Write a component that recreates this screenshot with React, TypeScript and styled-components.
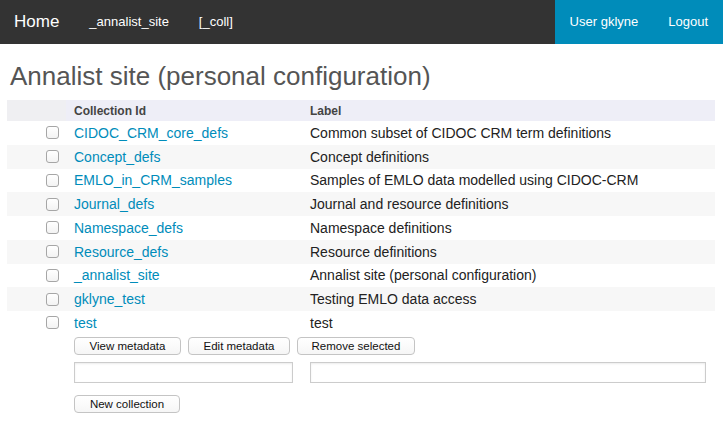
import React from "react";
import styled, { createGlobalStyle } from "styled-components";

const GlobalStyle = createGlobalStyle`
  html, body {
    margin: 0;
    padding: 0;
    background: #ffffff;
    font-family: "Liberation Sans", Arial, sans-serif;
    color: #222222;
  }
`;

interface Collection {
  id: string;
  label: string;
}

const collections: Collection[] = [
  { id: "CIDOC_CRM_core_defs", label: "Common subset of CIDOC CRM term definitions" },
  { id: "Concept_defs", label: "Concept definitions" },
  { id: "EMLO_in_CRM_samples", label: "Samples of EMLO data modelled using CIDOC-CRM" },
  { id: "Journal_defs", label: "Journal and resource definitions" },
  { id: "Namespace_defs", label: "Namespace definitions" },
  { id: "Resource_defs", label: "Resource definitions" },
  { id: "_annalist_site", label: "Annalist site (personal configuration)" },
  { id: "gklyne_test", label: "Testing EMLO data access" },
  { id: "test", label: "test" },
];

const TopBar = styled.nav`
  display: flex;
  justify-content: space-between;
  align-items: stretch;
  height: 44px;
  background-color: #333333;
`;

const NavGroup = styled.div<{ $accent?: boolean }>`
  display: flex;
  align-items: center;
  padding: ${(p) => (p.$accent ? "0" : "0 0 0 14px")};
  background-color: ${(p) => (p.$accent ? "#008cba" : "transparent")};
`;

const NavLink = styled.a<{ $big?: boolean; $first?: boolean }>`
  color: #ffffff;
  text-decoration: none;
  font-size: ${(p) => (p.$big ? "17px" : "13px")};
  padding: ${(p) => (p.$first ? "0 30px 0 0" : "0 15px")};
  line-height: 44px;
  margin-right: ${(p) => (p.$first ? "-15px" : "0")};
`;

const Page = styled.main`
  padding: 0 8px 0 7px;
`;

const Title = styled.h1`
  margin: 0;
  padding: 16px 0 0 3px;
  height: 56px;
  box-sizing: border-box;
  font-size: 26px;
  font-weight: normal;
  line-height: 32px;
  color: #555555;
`;

const Grid = styled.div`
  display: grid;
  grid-template-columns: 59px 236px 1fr;
`;

const HeadCell = styled.div<{ $lead?: boolean }>`
  height: 21px;
  display: flex;
  align-items: center;
  padding-left: 8px;
  background-color: ${(p) => (p.$lead ? "#efeff2" : "#eeeef7")};
  font-size: 12px;
  font-weight: bold;
  color: #444444;
`;

const Row = styled.div<{ $striped: boolean }>`
  display: contents;

  & > div {
    background-color: ${(p) => (p.$striped ? "#f7f7f7" : "#ffffff")};
  }
`;

const Cell = styled.div`
  height: 23.75px;
  display: flex;
  align-items: center;
  padding-left: 8px;
  font-size: 14px;
  color: #222222;
`;

const CheckCell = styled.div`
  height: 23.75px;
  display: flex;
  align-items: center;
  padding-left: 39px;
`;

const Check = styled.span`
  display: inline-block;
  width: 11px;
  height: 11px;
  border: 1px solid #a6a6a6;
  border-radius: 3px;
  background: linear-gradient(#ffffff, #f3f3f3);
`;

const Link = styled.a`
  color: #008cba;
  text-decoration: none;
`;

const Actions = styled.div`
  display: grid;
  grid-template-columns: 59px 236px 1fr;
  row-gap: 7px;
  padding-top: 2px;
`;

const ButtonRow = styled.div`
  grid-column: 2 / 4;
  display: flex;
  gap: 7px;
  padding-left: 8px;
`;

const Button = styled.button<{ $w: number }>`
  width: ${(p) => p.$w}px;
  height: 18px;
  padding: 0;
  border: 1px solid #c4c4c4;
  border-radius: 4px;
  background: linear-gradient(#ffffff, #f6f6f6);
  font-family: "Liberation Sans", Arial, sans-serif;
  font-size: 11.5px;
  color: #111111;
`;

const InputCell = styled.div<{ $col: number }>`
  grid-column: ${(p) => p.$col};
  padding: 0 9px 0 8px;
`;

const TextInput = styled.input`
  display: block;
  width: 100%;
  height: 21px;
  box-sizing: border-box;
  border: 1px solid #cccccc;
  box-shadow: inset 0 1px 2px rgba(0, 0, 0, 0.08);
  background: #ffffff;
  margin: 0;
`;

const NewRow = styled.div`
  grid-column: 2 / 4;
  padding: 4px 0 0 8px;
`;

export default function App() {
  return (
    <>
      <GlobalStyle />
      <TopBar>
        <NavGroup>
          <NavLink $big $first>Home</NavLink>
          <NavLink>_annalist_site</NavLink>
          <NavLink>[_coll]</NavLink>
        </NavGroup>
        <NavGroup $accent>
          <NavLink>User gklyne</NavLink>
          <NavLink>Logout</NavLink>
        </NavGroup>
      </TopBar>
      <Page>
        <Title>Annalist site (personal configuration)</Title>
        <Grid>
          <HeadCell $lead />
          <HeadCell>Collection Id</HeadCell>
          <HeadCell>Label</HeadCell>
          {collections.map((c, i) => (
            <Row key={c.id} $striped={i % 2 === 1}>
              <CheckCell>
                <Check />
              </CheckCell>
              <Cell>
                <Link>{c.id}</Link>
              </Cell>
              <Cell>{c.label}</Cell>
            </Row>
          ))}
        </Grid>
        <Actions>
          <ButtonRow>
            <Button $w={107}>View metadata</Button>
            <Button $w={102}>Edit metadata</Button>
            <Button $w={118}>Remove selected</Button>
          </ButtonRow>
          <InputCell $col={2}>
            <TextInput type="text" />
          </InputCell>
          <InputCell $col={3}>
            <TextInput type="text" />
          </InputCell>
          <NewRow>
            <Button $w={106}>New collection</Button>
          </NewRow>
        </Actions>
      </Page>
    </>
  );
}
